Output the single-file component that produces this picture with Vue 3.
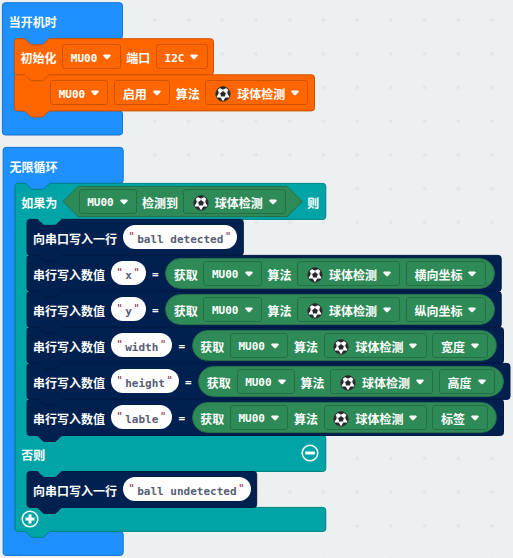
<script setup>
const notchRight =
  'c1.5 0 2.25 .75 3 1.5 l3 3 c.75 .75 1.5 1.5 3 1.5 h9 c1.5 0 2.25 -.75 3 -1.5 l3 -3 c.75 -.75 1.5 -1.5 3 -1.5'
const notchLeft =
  'c-1.5 0 -2.25 .75 -3 1.5 l-3 3 c-.75 .75 -1.5 1.5 -3 1.5 h-9 c-1.5 0 -2.25 -.75 -3 -1.5 l-3 -3 c-.75 -.75 -1.5 -1.5 -3 -1.5'

// A plain statement: notch on top, tab at the bottom
function statement(x, y, r, b) {
  return `M${x} ${y + 3} a3 3 0 0 1 3 -3 H${x + 9} ${notchRight} H${r - 3} a3 3 0 0 1 3 3 V${b - 3} a3 3 0 0 1 -3 3 H${x + 36} ${notchLeft} H${x + 3} a3 3 0 0 1 -3 -3 Z`
}

// A wrapping block; mouths = [[top, bottom], ...]
function wrapper(x, y, r, b, mouths, linked) {
  let d = `M${x} ${y + 3} a3 3 0 0 1 3 -3 `
  if (linked) d += `H${x + 9} ${notchRight} `
  d += `H${r - 3} a3 3 0 0 1 3 3 `
  for (const [t, e] of mouths) {
    d += `V${t - 3} a3 3 0 0 1 -3 3 H${x + 48} ${notchLeft} H${x + 15} a3 3 0 0 0 -3 3 V${e - 3} a3 3 0 0 0 3 3 H${r - 3} a3 3 0 0 1 3 3 `
  }
  d += `V${b - 3} a3 3 0 0 1 -3 3 `
  if (linked) d += `H${x + 36} ${notchLeft} `
  return d + `H${x + 3} a3 3 0 0 1 -3 -3 Z`
}

const shapes = [
  { c: 'blue', d: wrapper(2.4, 2.7, 122.5, 135, [[38.7, 110.9]], false) },
  { c: 'orange', d: statement(14.4, 38.7, 213.5, 74.8) },
  { c: 'orange', d: statement(14.4, 74.8, 314.5, 110.9) },
  { c: 'blue', d: wrapper(3.1, 147.4, 123.2, 555.4, [[183.4, 531.4]], false) },
  { c: 'teal', d: wrapper(15.1, 183.4, 325.8, 531.4, [[219.4, 435.5], [471.5, 507.4]], true) },
  { c: 'green', d: 'M63 201.5 L78.3 186.4 H287.2 L302.3 201.5 L287.2 216.6 H78.3 Z' },
  { c: 'navy', d: statement(27.1, 219.4, 243.3, 255.4) },
  { c: 'navy', d: statement(27.1, 255.4, 501.2, 291.4) },
  { c: 'navy', d: statement(27.1, 291.4, 501.2, 327.4) },
  { c: 'navy', d: statement(27.1, 327.4, 503.5, 363.4) },
  { c: 'navy', d: statement(27.1, 363.4, 510, 399.4) },
  { c: 'navy', d: statement(27.1, 399.4, 503.5, 435.5) },
  { c: 'navy', d: statement(27.1, 471.5, 256.7, 507.4) },
]

const L = (t) => ({ k: 'label', t })
const F = (t) => ({ k: 'field', t })
const B = { k: 'field', t: '球体检测', ball: true }
const S = (t) => ({ k: 'text', t })
const get = (prop) => ({ k: 'pill', items: [L('获取'), F('MU00'), L('算法'), B, F(prop)] })
const value = (name, prop) => ({
  c: 'inner',
  items: [L('串行写入数值'), S(name), { k: 'eq', t: '=' }, get(prop)],
})

const scripts = [
  {
    c: 'start',
    rows: [
      { c: 'hat', items: [L('当开机时')] },
      { c: 'first', items: [L('初始化'), F('MU00'), L('端口'), F('I2C')] },
      { c: 'first indent', items: [F('MU00'), F('启用'), L('算法'), B] },
    ],
  },
  {
    c: 'forever',
    rows: [
      { c: 'hat', items: [L('无限循环')] },
      { c: 'first', items: [L('如果为'), { k: 'hex', items: [F('MU00'), L('检测到'), B] }, L('则')] },
      { c: 'inner', items: [L('向串口写入一行'), S('ball detected')] },
      value('x', '横向坐标'),
      value('y', '纵向坐标'),
      value('width', '宽度'),
      value('height', '高度'),
      value('lable', '标签'),
      { c: 'first otherwise', items: [L('否则'), { k: 'minus' }] },
      { c: 'inner', items: [L('向串口写入一行'), S('ball undetected')] },
      { c: 'first foot', items: [{ k: 'plus' }] },
    ],
  },
]
const nested = (it) => it.items || [it]
const isLatin = (t) => /^[\w ]+$/.test(t)
</script>

<template>
  <main class="workspace">
    <svg class="shapes" width="513" height="558" viewBox="0 0 513 558">
      <defs>
        <pattern id="grid" x="3" y="3.2" width="33.72" height="33.72" patternUnits="userSpaceOnUse">
          <path d="M14.8 16.9 h4.4 M17 14.7 v4.4" stroke="#dde1e3" stroke-width="1" />
        </pattern>
      </defs>
      <rect width="513" height="558" fill="url(#grid)" />
      <path v-for="(s, i) in shapes" :key="i" :class="s.c" :d="s.d" />
    </svg>

    <section v-for="s in scripts" :key="s.c" class="script" :class="s.c">
      <div v-for="(row, r) in s.rows" :key="r" class="row" :class="row.c">
        <div v-for="(it, i) in row.items" :key="i" class="slot" :class="it.k">
          <template v-for="(n, j) in nested(it)" :key="j">
            <span v-if="n.k === 'label'" class="cjk">{{ n.t }}</span>
            <span v-else-if="n.k === 'eq'" class="mono">{{ n.t }}</span>
            <span v-else-if="n.k === 'field'" class="box" :class="{ withball: n.ball }">
              <svg v-if="n.ball" class="ball" width="16" height="16" viewBox="0 0 16 16">
                <circle cx="8" cy="8" r="7.1" fill="#fff" stroke="#26282b" stroke-width="1" />
                <g fill="#26282b">
                  <path d="M8 5.1 L10.9 7.2 L9.8 10.5 H6.2 L5.1 7.2 Z" />
                  <path d="M4.6 1.2 Q8 0 11.4 1.2 L10.5 2.6 L8 3.5 L5.5 2.6 Z" />
                  <path d="M14.1 4 Q15.5 7 14.9 10.2 L13.2 9.2 L12.3 7 L12.7 4.8 Z" />
                  <path d="M1.9 4 Q.5 7 1.1 10.2 L2.8 9.2 L3.7 7 L3.3 4.8 Z" />
                  <path d="M13.4 12.4 Q11.6 14.8 9 15.1 L9.2 13.1 L10.9 11.6 L12.9 11.5 Z" />
                  <path d="M2.6 12.4 Q4.4 14.8 7 15.1 L6.8 13.1 L5.1 11.6 L3.1 11.5 Z" />
                </g>
                <path
                  d="M8 5 V3 M10.9 7.2 L12.6 6.8 M9.8 10.5 L11 12 M6.2 10.5 L5 12 M5.1 7.2 L3.4 6.8"
                  stroke="#777"
                  stroke-width=".5"
                />
              </svg>
              <span :class="isLatin(n.t) ? 'latin' : 'cjk'">{{ n.t }}</span>
              <svg class="arrow" width="8" height="6" viewBox="0 0 8 6">
                <path d="M1.2 .5 H6.8 Q8.4 1 7.4 2.3 L4.8 4.9 Q4 5.6 3.2 4.9 L.6 2.3 Q-.4 1 1.2 .5 Z" fill="#fff" />
              </svg>
            </span>
            <span v-else-if="n.k === 'text'" class="string">
              <i class="quote">"</i><b class="content">{{ n.t }}</b><i class="quote end">"</i>
            </span>
            <svg v-else class="toggle" width="18" height="18" viewBox="0 0 18 18">
              <circle cx="9" cy="9" r="7.8" fill="none" stroke="#fff" stroke-width="1.5" />
              <path :d="n.k === 'plus' ? 'M4.5 9 H13.5 M9 4.5 V13.5' : 'M4.2 9 H13.8'" stroke="#fff" stroke-width="3" />
            </svg>
          </template>
        </div>
      </div>
    </section>
  </main>
</template>

<style>
body {
  background: #ecf0f1;
  overflow: hidden;
}
</style>

<style scoped>
.workspace {
  position: relative;
  width: 513px;
  height: 558px;
  overflow: hidden;
  background: #ecf0f1;
  color: #fff;
  font: bold 12px/16px 'DejaVu Sans Mono', 'Noto Sans CJK SC', monospace;
}
.shapes {
  position: absolute;
  left: 0;
  top: 0;
}
.shapes .blue { fill: #1e90ff; stroke: #1873cc; }
.shapes .orange { fill: #ff6600; stroke: #cc5200; }
.shapes .teal { fill: #00a4a6; stroke: #008385; }
.shapes .navy { fill: #002050; stroke: #001a40; }
.shapes .green { fill: #2e8b57; stroke: #256f46; }
.script {
  position: absolute;
  display: flex;
  flex-direction: column;
  white-space: nowrap;
}
.start { left: 2.4px; top: 2.7px; }
.forever { left: 3.1px; top: 147.4px; }
.row {
  display: flex;
  align-items: center;
  gap: 5.7px;
  height: 36px;
  padding-left: 18.1px;
}
.row.hat { padding-left: 6.3px; }
.row.inner { padding-left: 30px; gap: 6.1px; }
.row.indent { padding-left: 47.7px; }
.foot { height: 24px; }
.slot {
  display: flex;
  align-items: center;
  gap: 6px;
}
.slot.pill {
  box-sizing: border-box;
  height: 31px;
  gap: 5.7px;
  padding: 0 8px 0 7.7px;
  border: 1px solid #256f46;
  border-radius: 16px;
  background: #2e8b57;
}
.slot.hex { padding: 0 15.7px; gap: 5px; }
.minus { margin-left: 250.5px; }
.cjk {
  font: bold 12px/16px 'Noto Sans CJK SC', sans-serif;
  padding-top: 2.5px;
}
.mono {
  width: 7px;
  font-size: 11px;
  padding-top: 4px;
}
.box {
  box-sizing: border-box;
  display: flex;
  align-items: center;
  height: 25px;
  padding: 0 8.3px 0 7.6px;
  border: 1px solid #cc5200;
  border-radius: 3px;
}
.pill .box,
.hex .box { border-color: #256f46; }
.box.withball { padding-left: 8.7px; }
.ball { margin: 2.4px 6px 0 0; }
.latin {
  font: bold 11px/16px 'DejaVu Sans Mono', monospace;
  padding-top: 4px;
}
.arrow { margin: 1.6px 0 0 6px; }
.string {
  box-sizing: border-box;
  display: flex;
  align-items: center;
  height: 24px;
  padding: 0 6px;
  border-radius: 12px;
  background: #fff;
  color: #575e75;
  font-size: 11px;
}
.quote {
  width: 8px;
  height: 16px;
  font: normal 11px/15px 'DejaVu Sans Mono', monospace;
  color: #8b1e4b;
}
.quote:first-child { text-indent: -1px; }
.quote.end { text-align: right; }
.content { padding-top: 5px; }
.toggle { display: block; }
</style>
